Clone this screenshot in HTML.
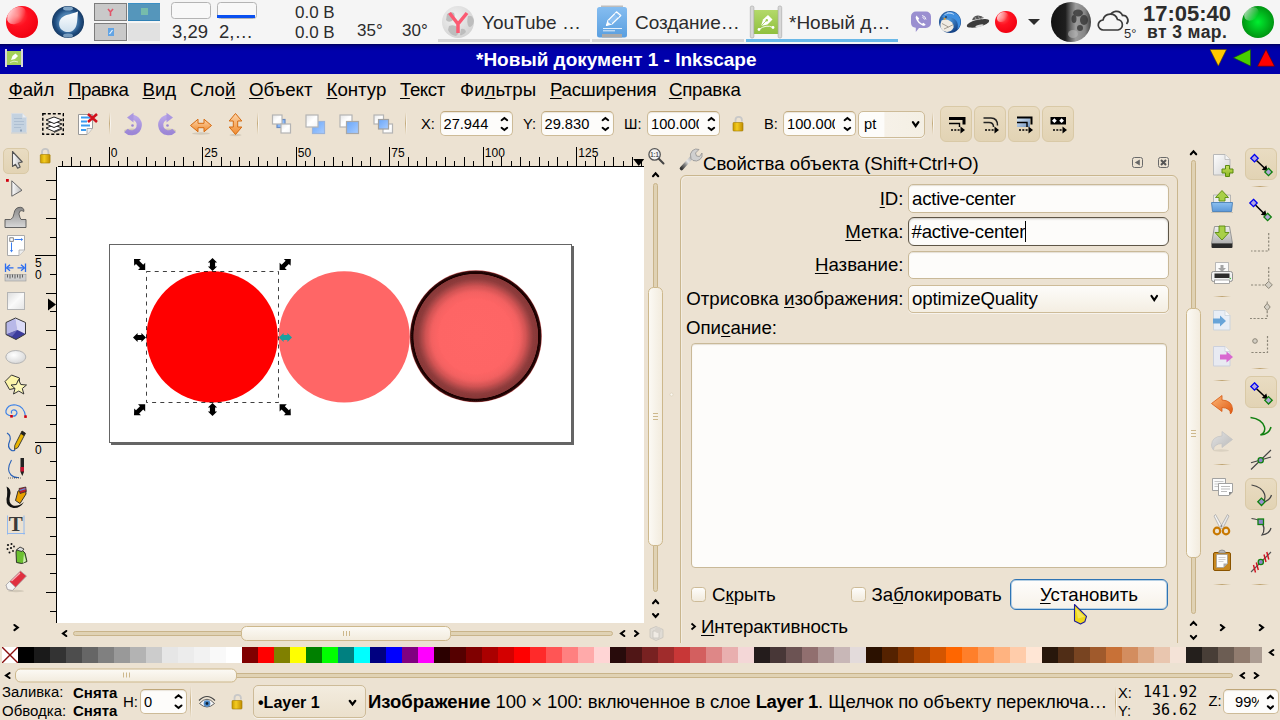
<!DOCTYPE html>
<html lang="ru">
<head>
<meta charset="utf-8">
<title>*Новый документ 1 - Inkscape</title>
<style>
html,body{margin:0;padding:0;}
body{width:1280px;height:720px;overflow:hidden;position:relative;background:#ece2d2;font-family:"Liberation Sans",sans-serif;color:#000;}
.abs,.abs *{position:absolute;}
.abs{position:absolute;}
div,span,svg{box-sizing:border-box;}
.t{position:absolute;white-space:nowrap;line-height:1;}
u{position:static !important;text-decoration:underline;text-underline-offset:2px;text-decoration-thickness:1px;}
/* ---------- top panel ---------- */
#panel{position:absolute;left:0;top:0;width:1280px;height:44px;background:#f5f5f5;}
#panel .t{font-family:"Liberation Sans",sans-serif;color:#2c2c2c;}
/* ---------- title bar ---------- */
#title{position:absolute;left:0;top:44px;width:1280px;height:30px;background:linear-gradient(#000058 0,#00008c 2px,#0000a6 5px,#0000ab 8px,#0000ab 100%);}
#title .t{color:#fff;font-weight:bold;font-size:18.67px;}
/* ---------- inkscape chrome ---------- */
#menubar{position:absolute;left:0;top:74px;width:1280px;height:30px;}
#menubar .t{font-size:18.67px;top:6.500px;}
.entry{position:absolute;background:#fdfcfa;border:1px solid #c9b998;border-radius:5px;box-shadow:inset 0 1px 1px rgba(120,95,50,.18);}
.lbl{font-size:18.67px;}

.tl{font-size:14.670px;top:13px;}
.spin{position:absolute;top:7px;width:73px;height:25px;background:#fdfcfa;border:1px solid #cdbb98;border-top-color:#bfa77a;border-radius:5px;box-shadow:inset 0 1px 1px rgba(120,95,50,.15);}
.spin .t{left:2.500px;top:5px;font-size:14.670px;}
.spin .clipv{left:3px;width:48px;overflow:hidden;height:16px;}
i.up,i.dn{position:absolute;width:8px;height:5px;}
.spin i.up{left:60px;top:5px;}
.spin i.dn{left:60px;top:15px;}
i.up::before,i.dn::before{content:"";position:absolute;left:1.500px;top:0;width:3.300px;height:3.300px;border:solid #000;border-width:1.900px 0 0 1.900px;transform:rotate(45deg);transform-origin:center;}
i.up::before{top:1.200px;}
i.dn::before{top:-1.600px;transform:rotate(225deg);}
.combo{position:absolute;border:1px solid #cdbb98;border-radius:5px;background:linear-gradient(to right,#fdfcfa 0,#fdfcfa 38%,#f6f1e8 40%,#f4efe4 100%);box-shadow:0 1px 0 rgba(255,255,255,.6);}
.tbtn{position:absolute;top:2px;width:32px;height:36px;background:linear-gradient(#e9dcc2,#e2d3b4);border:1px solid #d9c9a6;border-radius:6px;}
.tbtn svg{position:absolute;left:-1px;top:-1.700px;}

i.chev{position:absolute;width:7px;height:8px;}
i.chev::before{content:"";position:absolute;left:0;top:0;width:3.300px;height:3.300px;border:solid #000;border-width:1.900px 1.900px 0 0;transform-origin:center;}
i.chev.r::before{transform:translate(-.500px,1.400px) rotate(45deg);}
i.chev.l::before{transform:translate(2px,1.400px) rotate(225deg);}
i.chev.u::before{transform:translate(1px,2.200px) rotate(-45deg);}
i.chev.d::before{transform:translate(1px,-.300px) rotate(135deg);}

.ra{right:306.500px;}
.entry.foc{border:1.500px solid #5e5546;border-radius:6px;box-shadow:inset 0 1px 2px rgba(60,50,30,.25);}
.chk{position:absolute;width:15px;height:15px;border:1px solid #cdbb98;border-radius:3.500px;background:linear-gradient(#fefdfb,#f1eadc);}

.tsel{position:absolute;width:32px;height:32px;background:linear-gradient(#e9dcc2,#e2d3b4);border:1px solid #d9c9a6;border-radius:6px;}

.s15{font-size:14.670px;}
.b{font-weight:bold;}
.mono{font-family:"DejaVu Sans Mono","Liberation Mono",monospace;font-size:15px;}
b{position:static !important;}
</style>
</head>
<body>
<!-- ================= TOP PANEL ================= -->
<div id="panel">
<svg class="abs" style="left:0;top:0" width="1280" height="44" viewBox="0 0 1280 44">
<defs>
<radialGradient id="gRed" cx="0.35" cy="0.3" r="0.75"><stop offset="0" stop-color="#ff5a5a"/><stop offset="0.45" stop-color="#ff1020"/><stop offset="1" stop-color="#f00010"/></radialGradient>
<linearGradient id="gGloss" x1="0" y1="0" x2="0.6" y2="1"><stop offset="0" stop-color="#fff" stop-opacity="0.95"/><stop offset=".5" stop-color="#fff" stop-opacity="0.45"/><stop offset="1" stop-color="#fff" stop-opacity="0"/></linearGradient>
<radialGradient id="gGreen" cx="0.5" cy="0.5" r="0.55"><stop offset="0" stop-color="#00ee30"/><stop offset="0.7" stop-color="#00a818"/><stop offset="1" stop-color="#008c10"/></radialGradient>
<radialGradient id="gBlueBall" cx="0.5" cy="0.5" r="0.5"><stop offset="0.55" stop-color="#4a7eae"/><stop offset="0.8" stop-color="#1f4d80"/><stop offset="1" stop-color="#173a63"/></radialGradient>
<linearGradient id="gDrop" x1="0" y1="0" x2="0" y2="1"><stop offset="0" stop-color="#ffffff"/><stop offset="1" stop-color="#cfe0ee"/></linearGradient>
<radialGradient id="gGlobe" cx="0.4" cy="0.35" r="0.7"><stop offset="0" stop-color="#f2f2f2"/><stop offset="1" stop-color="#d2d2d2"/></radialGradient>
<linearGradient id="gMoon" x1="0" y1="0" x2="1" y2="0"><stop offset="0" stop-color="#121212"/><stop offset="0.36" stop-color="#1e1e1e"/><stop offset="0.5" stop-color="#686868"/><stop offset="0.62" stop-color="#9c9c9c"/><stop offset="0.85" stop-color="#868686"/><stop offset="1" stop-color="#404040"/></linearGradient>
<linearGradient id="gInk" x1="0" y1="0" x2="0" y2="1"><stop offset="0" stop-color="#b3d96a"/><stop offset="1" stop-color="#8fc03e"/></linearGradient>
<linearGradient id="gDoc" x1="0" y1="0" x2="0" y2="1"><stop offset="0" stop-color="#85bdf0"/><stop offset="1" stop-color="#5a9fe0"/></linearGradient>
<radialGradient id="gTb" cx="0.45" cy="0.4" r="0.6"><stop offset="0" stop-color="#4f9be0"/><stop offset="1" stop-color="#123f82"/></radialGradient>
</defs>
<!-- red ball -->
<circle cx="22" cy="22" r="16" fill="url(#gRed)"/>
<ellipse cx="16.500" cy="15.500" rx="10.500" ry="7.500" transform="rotate(-40 16.500 15.500)" fill="url(#gGloss)"/>
<!-- blue drop ball -->
<circle cx="68" cy="22" r="16" fill="url(#gBlueBall)"/>
<ellipse cx="68" cy="8.5" rx="5" ry="2" fill="#9fc0dc" opacity=".8"/>
<ellipse cx="68" cy="35.5" rx="5" ry="2" fill="#9fc0dc" opacity=".7"/>
<path d="M78 11.500 C77 19 78 26.500 73 30.500 C68.500 33.500 61.500 32 59.500 26.500 C58 21 61.500 16.500 66.500 15 C71 13.800 74.500 13 78 11.500 Z" fill="url(#gDrop)"/>
<!-- pager -->
<rect x="94.500" y="3.500" width="32" height="17" fill="#c9c9c9" stroke="#7d7d7d"/>
<rect x="128" y="3" width="32" height="18" fill="#5596bb"/><rect x="128" y="3" width="32" height="1" fill="#3a8fc4"/><rect x="128" y="20" width="32" height="1" fill="#2f80b4"/>
<rect x="94.500" y="23.500" width="32" height="17" fill="#c9c9c9" stroke="#7d7d7d"/>
<rect x="128" y="23" width="32" height="18" fill="#e1e1e1"/>
<path d="M108 9 L110.500 12 L113 9 M110.500 12 V16" stroke="#e0566a" stroke-width="1.600" fill="none"/>
<rect x="141" y="8" width="7" height="7" fill="#7cc3a8" opacity=".85"/>
<rect x="108" y="28" width="6" height="8" fill="#62a4e4"/><path d="M109.500 34 L112.500 30" stroke="#e8f2fc" stroke-width="1.200"/>
<!-- monitors -->
<rect x="171.500" y="2.500" width="39" height="16" rx="3" fill="#f8f8f8" stroke="#b4b4b4"/>
<rect x="217.500" y="2.500" width="39" height="16" rx="3" fill="#f8f8f8" stroke="#b4b4b4"/>
<rect x="217" y="15" width="38" height="3" fill="#0a50f0"/>
<!-- yandex browser -->
<circle cx="458" cy="22" r="16" fill="url(#gGlobe)"/>
<path d="M447 14 q4 -3 7 -1 q2 4 -2 8 q-4 2 -6 -1 z M468 16 q5 -1 6 5 q-1 6 -5 6 q-3 -4 -1 -11 z M449 26 q6 -2 9 2 q2 5 -2 8 q-6 -1 -8 -6 z M461 29 q4 -1 5 3 q-3 4 -6 3 z" fill="#bdbdbd"/>
<path d="M449.500 13 L458 24 L467 13 M458 23 V33" stroke="#fb5a72" stroke-width="3.500" fill="none" stroke-linejoin="miter"/>
<!-- task underlines -->
<rect x="438" y="39" width="152" height="3" fill="#d5d5d5"/>
<rect x="592" y="39" width="152" height="3" fill="#d5d5d5"/>
<rect x="746" y="39" width="152" height="3" fill="#6bb9e8"/>
<!-- doc icon -->
<rect x="601" y="5.500" width="22" height="3" fill="#bdbdbd"/>
<rect x="597" y="7" width="30" height="30.500" rx="2.500" fill="url(#gDoc)"/>
<rect x="602" y="34" width="20" height="3.500" fill="#aaa"/>
<path d="M603 28.500 h19 M603 30.800 h12" stroke="#e4f0fb" stroke-width="1"/>
<path d="M606.500 25.500 L608 20.500 L616.500 11.800 L620.800 15.500 L612 24 Z" fill="#8cc0f2" stroke="#fff" stroke-width="1.200" stroke-linejoin="round"/><path d="M606.500 25.500 L607.600 21.800 L610.500 24.300 Z" fill="#fff"/><path d="M614.800 13.500 L619 17.200" stroke="#6aabe8" stroke-width="1"/><path d="M608 20.500 L612 24" stroke="#6aabe8" stroke-width=".8"/>
<!-- inkscape icon -->
<g id="inkico">
<rect x="753" y="10" width="26" height="24" fill="url(#gInk)"/>
<rect x="750.300" y="6" width="3.600" height="32" rx="1.500" fill="#d8d8d8" stroke="#a4a4a4" stroke-width=".6"/>
<rect x="778.100" y="6" width="3.600" height="32" rx="1.500" fill="#d8d8d8" stroke="#a4a4a4" stroke-width=".6"/>
<path d="M759 29.500 Q766 24 773 27.500" stroke="#f4fae8" stroke-width="1" fill="none"/>
<circle cx="759" cy="29.500" r="1.400" fill="#fff"/><circle cx="773" cy="27.500" r="1.400" fill="#fff"/>
<path d="M761 26 L763 19.500 L768 15 L772.500 19.500 L767.500 24.500 Z" fill="#fff"/><circle cx="766.800" cy="20.200" r="1.200" fill="#9ccc50"/><path d="M761 26 L766 21" stroke="#9ccc50" stroke-width=".8"/>
</g>
<!-- viber -->
<path d="M916 11.500 h10 a5 5 0 0 1 5 5 v6.500 a5 5 0 0 1 -5 5 h-7 l-3.200 4 v-4.300 a5 5 0 0 1 -4.800 -4.700 v-6.500 a5 5 0 0 1 5 -5 z" fill="#9a8fd0"/>
<path d="M916.500 15.500 q-1.500 1.500 -.5 3.500 q2 4.500 6.500 6.500 q2 .8 3.200 -.8 l-2.200 -2 l-1.500 1 q-2.500 -1.200 -3.800 -3.800 l1 -1.500 z" fill="#fff"/>
<path d="M922 15.500 q3.500 .5 4 4 M922.500 17.500 q1.700 .3 2 2" stroke="#fff" stroke-width=".9" fill="none"/>
<!-- thunderbird -->
<circle cx="950" cy="22" r="11" fill="url(#gTb)"/>
<path d="M942 17 q3.500 -5.500 10 -5 q7 1.500 8.500 8 q.500 6 -3.500 10 q2 -5 -.500 -9 q-3 -4 -8 -3.500 q-4 .500 -6.500 -.500 z" fill="#3f8fe0"/>
<path d="M944.500 14.500 q4 -2.500 8 -1 M947 13 q4 -1 7 1.500" stroke="#cfe4fa" stroke-width=".7" fill="none"/>
<path d="M941.500 20.500 q4.500 -2 8.500 .500 q4 2.500 3.500 6.500 q-1.500 4 -6.500 4.500 q-4.500 -.500 -6.500 -4.500 q-.800 -3 1 -7 z" fill="#f0ebe2"/>
<path d="M942 23.500 l6.500 3.500 l5 -2.500 M944 29 l4.500 -2" stroke="#8f887c" stroke-width=".8" fill="none"/>
<path d="M943.500 17.500 l3 1.200 l-2.500 1.300 z" fill="#e8a020"/><circle cx="946" cy="17" r=".8" fill="#111"/>
<!-- ufo -->
<ellipse cx="978" cy="23.300" rx="11.500" ry="3.600" transform="rotate(-13 978 23.300)" fill="#3c3c3c"/>
<path d="M972 20.300 q1 -4.300 5.500 -4.800 q4.500 -.200 6.500 2.500 z" fill="#555"/>
<path d="M975 17.200 l1.500 3 M978.500 16.500 l1.200 3 M982 17 l.800 2.500" stroke="#bbb" stroke-width=".7"/>
<ellipse cx="979.500" cy="25.800" rx="4.200" ry="1.200" transform="rotate(-13 979.500 25.800)" fill="#dcdcdc"/>
<!-- red ball small -->
<circle cx="1006" cy="22" r="11" fill="url(#gRed)"/>
<ellipse cx="1002.500" cy="17" rx="6" ry="4.500" transform="rotate(-35 1002.500 17)" fill="url(#gGloss)"/>
<!-- arrow -->
<path d="M1028 19 h12 l-6 6 z" fill="#2d2d2d"/>
<!-- moon -->
<circle cx="1071" cy="22" r="20" fill="url(#gMoon)"/>
<g fill="#303030" opacity=".75"><ellipse cx="1078" cy="13" rx="5" ry="3.500"/><ellipse cx="1084" cy="20" rx="4" ry="5"/><ellipse cx="1080" cy="28" rx="3" ry="3"/><ellipse cx="1074" cy="19" rx="2.500" ry="4"/></g>
<ellipse cx="1073" cy="34" rx="5" ry="4" fill="#b8b8b8" opacity=".6"/>
<!-- cloud -->
<path d="M1110 17 a6.500 6.500 0 0 1 12.500 -1.500 a5 5 0 0 1 4 8.500" stroke="#3a3a3a" stroke-width="1.700" fill="none"/>
<path d="M1103.500 30 a5 5 0 0 1 -.5 -10 a7.500 7.500 0 0 1 14.500 -.5 a5.300 5.300 0 0 1 .5 10.500 z" stroke="#3a3a3a" stroke-width="1.700" fill="#f5f5f5"/>
<!-- green ball -->
<circle cx="1258" cy="22" r="16" fill="url(#gGreen)"/>
<ellipse cx="1251.500" cy="14" rx="8" ry="6" transform="rotate(-35 1251.500 14)" fill="url(#gGloss)" opacity=".8"/>
</svg>
<span class="t" style="left:172px;top:23px;font-size:18.500px;">3,29</span>
<span class="t" style="left:219px;top:23px;font-size:18.500px;">2,…</span>
<span class="t" style="left:295px;top:4px;font-size:17px;">0.0 B</span>
<span class="t" style="left:295px;top:24px;font-size:17px;">0.0 B</span>
<span class="t" style="left:357px;top:21.700px;font-size:17px;">35°</span>
<span class="t" style="left:402px;top:21.700px;font-size:17px;">30°</span>
<span class="t" style="left:482px;top:12.700px;font-size:19px;">YouTube …</span>
<span class="t" style="left:635px;top:12.700px;font-size:19px;">Создание…</span>
<span class="t" style="left:789px;top:12.700px;font-size:19px;">*Новый д…</span>
<span class="t" style="left:1124px;top:27px;font-size:13px;">5°</span>
<span class="t" style="left:1143px;top:3px;font-size:22px;font-weight:bold;">17:05:40</span>
<span class="t" style="left:1147px;top:24px;font-size:17.500px;letter-spacing:.4px;font-weight:bold;">вт 3 мар.</span>
</div>
<!-- ================= TITLE BAR ================= -->
<div id="title">
<span class="t" id="ttxt" style="left:476px;top:6px;font-size:19px;">*Новый документ 1 - Inkscape</span>
<svg class="abs" style="left:0;top:0" width="1280" height="30" viewBox="0 44 1280 30">
<rect x="6" y="51" width="16" height="14" fill="#a4d05a"/>
<rect x="5" y="49" width="2" height="18" fill="#d8d8d8"/><rect x="21" y="49" width="2" height="18" fill="#d8d8d8"/>
<path d="M10 62.500 q4 -2.500 8 -.500" stroke="#f0f8e0" stroke-width=".8" fill="none"/><path d="M11 60 l1.500 -4 l3 -2.500 l2.500 2.500 l-3 3 z" fill="#fff"/>
<path d="M1210 49.500 h16.500 l-8.200 16.500 z" fill="#ffc800" stroke="#5a4600" stroke-width=".6"/>
<path d="M1250.500 49.500 v16.500 l-17 -8.200 z" fill="#48d000" stroke="#1a5000" stroke-width=".6"/>
<path d="M1257.500 66.200 h17 l-8.500 -16.700 z" fill="#ff0000" stroke="#600000" stroke-width=".6"/>
</svg>
</div>
<!-- ================= MENU BAR ================= -->
<div id="menubar">
<span class="t" style="left:8.5px;"><u>Ф</u>айл</span>
<span class="t" style="left:68.0px;letter-spacing:-.45px;"><u>П</u>равка</span>
<span class="t" style="left:142.5px;"><u>В</u>ид</span>
<span class="t" style="left:190.0px;">Сло<u>й</u></span>
<span class="t" style="left:249.0px;"><u>О</u>бъект</span>
<span class="t" style="left:326.5px;"><u>К</u>онтур</span>
<span class="t" style="left:400.0px;letter-spacing:-.45px;"><u>Т</u>екст</span>
<span class="t" style="left:460.0px;">Фи<u>л</u>ьтры</span>
<span class="t" style="left:550.0px;letter-spacing:-.22px;"><u>Р</u>асширения</span>
<span class="t" style="left:668.9px;letter-spacing:-.22px;"><u>С</u>правка</span>
</div>
<!-- ================= TOOLBAR ================= -->
<div id="toolbar" class="abs" style="left:0;top:104px;width:1280px;height:42px;">
<svg class="abs" style="left:0;top:0" width="1280" height="42" viewBox="0 104 1280 42">
<defs>
<linearGradient id="gPurple" x1="0" y1="0" x2="0" y2="1"><stop offset="0" stop-color="#b9a6e8"/><stop offset="1" stop-color="#9c86d6"/></linearGradient>
<linearGradient id="gOrange" x1="0" y1="0" x2="0" y2="1"><stop offset="0" stop-color="#fdd4a8"/><stop offset="1" stop-color="#f08c30"/></linearGradient>
<linearGradient id="gWhiteSq" x1="0" y1="0" x2="1" y2="1"><stop offset="0" stop-color="#e6e6e6"/><stop offset=".5" stop-color="#ffffff"/><stop offset="1" stop-color="#f4f4f4"/></linearGradient>
<linearGradient id="gBlueSq" x1="0" y1="0" x2="1" y2="1"><stop offset="0" stop-color="#6aa6f8"/><stop offset="1" stop-color="#a8ccff"/></linearGradient>
<linearGradient id="gLock" x1="0" y1="0" x2="1" y2="0"><stop offset="0" stop-color="#c89a00"/><stop offset=".4" stop-color="#f4cc20"/><stop offset="1" stop-color="#c08c00"/></linearGradient>
<linearGradient id="gSep" x1="0" y1="0" x2="0" y2="1"><stop offset="0" stop-color="#cdb890" stop-opacity="0"/><stop offset=".5" stop-color="#c4ab7c"/><stop offset="1" stop-color="#cdb890" stop-opacity="0"/></linearGradient>
<linearGradient id="gSepW" x1="0" y1="0" x2="0" y2="1"><stop offset="0" stop-color="#fff" stop-opacity="0"/><stop offset=".5" stop-color="#fff"/><stop offset="1" stop-color="#fff" stop-opacity="0"/></linearGradient>
</defs>
<!-- 1: greyed doc -->
<path d="M11.500 113.500 h11 l4 4 v15.500 h-15 z" fill="#c4d2e0" stroke="#d9dde2"/>
<path d="M22.500 113.500 v4 h4" fill="#e8eef4" stroke="#d9dde2" stroke-width=".8"/>
<g stroke="#aebfd2" stroke-width="1"><path d="M14 118.500h8M14 121.500h10M14 124.500h10M14 127.500h7"/></g>
<rect x="20" y="129.500" width="2" height="2" fill="#8fa3bb"/>
<rect x="11" y="132.500" width="16" height="1.200" fill="#d4d4d0"/>
<!-- 2: select all in layers -->
<rect x="42.800" y="113.800" width="20.500" height="20.500" fill="none" stroke="#000" stroke-width="1.400" stroke-dasharray="3 2"/>
<g stroke="#222" stroke-width="1" fill="#fff"><path d="M46 128 l8 -3 l8 3 l-8 3.500 z"/><path d="M46 124 l8 -3 l8 3 l-8 3.500 z"/><path d="M46 120 l8 -3 l8 3 l-8 3.500 z"/></g>
<path d="M54 131.500 l8 -3.500 v1.500 l-8 3.500 z" fill="#444"/>
<!-- 3: deselect -->
<path d="M78.500 114.500 h14 v14 l-5.500 6 h-8.500 z" fill="#fff" stroke="#999" stroke-width="1"/>
<path d="M87 134.500 v-6 h5.500" fill="#eee" stroke="#999" stroke-width=".8"/>
<g stroke="#3c9cf0" stroke-width="2"><path d="M81 117.500h9M81 121.500h6M81 125.500h9M81 130h5"/></g>
<path d="M88 114 l9 8 M97 114 l-9 8" stroke="#d0101c" stroke-width="2.600"/>
<!-- separators -->
<g id="seps">
<rect x="109" y="112" width="1" height="23" fill="url(#gSep)"/><rect x="110" y="112" width="1" height="23" fill="url(#gSepW)" opacity=".7"/>
<rect x="257" y="112" width="1" height="23" fill="url(#gSep)"/><rect x="258" y="112" width="1" height="23" fill="url(#gSepW)" opacity=".7"/>
<rect x="405" y="112" width="1" height="23" fill="url(#gSep)"/><rect x="406" y="112" width="1" height="23" fill="url(#gSepW)" opacity=".7"/>
<rect x="932" y="112" width="1" height="23" fill="url(#gSep)"/><rect x="933" y="112" width="1" height="23" fill="url(#gSepW)" opacity=".7"/>
</g>
<!-- rotate ccw -->
<ellipse cx="132" cy="131" rx="8" ry="2.500" fill="#b8b0a0" opacity=".55"/>
<path d="M131.500 117.200 A7.800 7.800 0 1 1 126 130.500" fill="none" stroke="url(#gPurple)" stroke-width="5"/>
<path d="M127 117.500 L133.500 112.800 V122.500 Z" fill="#ab97e0"/>
<circle cx="132.500" cy="125.500" r="1.300" fill="#9a84d4"/>
<!-- rotate cw -->
<ellipse cx="168" cy="131" rx="8" ry="2.500" fill="#b8b0a0" opacity=".55"/>
<path d="M168.500 117.200 A7.800 7.800 0 1 0 174 130.500" fill="none" stroke="url(#gPurple)" stroke-width="5"/>
<path d="M173 117.500 L166.500 112.800 V122.500 Z" fill="#ab97e0"/>
<circle cx="167.500" cy="125.500" r="1.300" fill="#9a84d4"/>
<!-- flip h -->
<ellipse cx="201" cy="133.500" rx="9" ry="1.200" fill="#b8b0a0" opacity=".5"/>
<path d="M190.500 125.500 L198 119.200 V123.300 H204 V119.200 L211.500 125.500 L204 131.800 V127.700 H198 V131.800 Z" fill="url(#gOrange)" stroke="#d56a10" stroke-width="1" stroke-linejoin="round"/>
<!-- flip v -->
<ellipse cx="235.500" cy="135" rx="6" ry="1.200" fill="#b8b0a0" opacity=".5"/>
<path d="M235.500 113.500 L241.800 121 H237.700 V127 H241.800 L235.500 134.500 L229.200 127 H233.300 V121 H229.200 Z" fill="url(#gOrange)" stroke="#d56a10" stroke-width="1" stroke-linejoin="round"/>
<!-- z-order 1 -->
<g stroke="#b4b4b4" stroke-width="1.200">
<rect x="277" y="119.500" width="8" height="8" fill="url(#gBlueSq)" stroke="#6a8cc0"/>
<rect x="272.500" y="115" width="9.500" height="9" fill="url(#gWhiteSq)"/>
<rect x="281" y="124" width="9.500" height="9" fill="url(#gWhiteSq)"/>
<!-- 2 -->
<rect x="312.500" y="121.500" width="12" height="12" fill="url(#gBlueSq)" stroke="#9ab4dc"/>
<rect x="306" y="115" width="12" height="12" fill="url(#gWhiteSq)"/>
<!-- 3 -->
<rect x="340" y="115" width="12" height="12" fill="url(#gWhiteSq)"/>
<rect x="346.500" y="121.500" width="12" height="12" fill="url(#gBlueSq)" stroke="#a8a8a8"/>
<!-- 4 -->
<rect x="374" y="115" width="9.500" height="9" fill="url(#gWhiteSq)"/>
<rect x="383" y="124" width="9.500" height="9" fill="url(#gWhiteSq)"/>
<rect x="378.500" y="119.500" width="10" height="9.500" fill="url(#gBlueSq)" stroke="#a0a0a0"/>
</g>
<!-- lock open -->
<path d="M735.500 122.500 v-2.500 a3.200 3.200 0 0 1 6.400 0 v1.500" fill="none" stroke="#c8c8c8" stroke-width="1.800"/>
<rect x="733" y="122.500" width="10" height="8.500" rx=".8" fill="url(#gLock)" stroke="#a07800" stroke-width=".6"/>
</svg>
<span class="t tl" style="left:421px;">X:</span>
<span class="t tl" style="left:523px;">Y:</span>
<span class="t tl" style="left:624px;">Ш:</span>
<span class="t tl" style="left:764px;">В:</span>
<div class="spin" style="left:440px;"><span class="t">27.944</span></div>
<div class="spin" style="left:541px;"><span class="t">29.830</span></div>
<div class="spin" style="left:647px;"><span class="t clipv">100.000</span></div>
<div class="spin" style="left:783px;"><span class="t clipv">100.000</span></div>
<div class="combo" style="left:858px;top:7px;width:67px;height:27px;"><span class="t" style="left:5px;top:5px;font-size:14.670px;">pt</span></div>
<div class="tbtn" style="left:940px;"><svg width="32" height="36" viewBox="0 0 32 36"><path d="M9 13.500 H24 V19.500" fill="none" stroke="#000" stroke-width="3"/><path d="M9 18.500 H19.500 V22" fill="none" stroke="#000" stroke-width="1.400"/><path d="M11 25 H21" stroke="#000" stroke-width="1.600" stroke-dasharray="2 1.300"/><path d="M20.500 21.500 L25 25 L20.500 28.500 Z" fill="#000"/></svg></div>
<div class="tbtn" style="left:974px;"><svg width="32" height="36" viewBox="0 0 32 36"><path d="M9.500 13 H17 Q23.500 13 23.500 20.500" fill="none" stroke="#222" stroke-width="1.500"/><path d="M9.500 17.500 H15 Q19.500 17.500 19.500 22" fill="none" stroke="#222" stroke-width="1.500"/><path d="M11 25 H21" stroke="#000" stroke-width="1.600" stroke-dasharray="2 1.300"/><path d="M20.500 21.500 L25 25 L20.500 28.500 Z" fill="#000"/></svg></div>
<div class="tbtn" style="left:1008px;"><svg width="32" height="36" viewBox="0 0 32 36"><defs><linearGradient id="gGr" x1="0" y1="0" x2="1" y2="1"><stop offset="0" stop-color="#d8e6f4"/><stop offset="1" stop-color="#7094c0"/></linearGradient></defs><rect x="9" y="13" width="13" height="9" fill="url(#gGr)"/><path d="M9 12.500 H23.500 V19.500" fill="none" stroke="#000" stroke-width="2"/><path d="M9 17.500 H19 V22" fill="none" stroke="#000" stroke-width="1.400"/><path d="M11 25 H21" stroke="#000" stroke-width="1.600" stroke-dasharray="2 1.300"/><path d="M20.500 21.500 L25 25 L20.500 28.500 Z" fill="#000"/></svg></div>
<div class="tbtn" style="left:1042px;"><svg width="32" height="36" viewBox="0 0 32 36"><rect x="8.500" y="12" width="15.500" height="7.500" fill="#000"/><g fill="#fff"><path d="M10 15.700 l2.400 -2.400 l2.400 2.400 l-2.400 2.400 z M17.200 15.700 l2.400 -2.400 l2.400 2.400 l-2.400 2.400 z"/></g><path d="M11 25 H21" stroke="#000" stroke-width="1.600" stroke-dasharray="2 1.300"/><path d="M20.500 21.500 L25 25 L20.500 28.500 Z" fill="#000"/></svg></div>
</div>
<!-- ================= LEFT TOOLBOX ================= -->

<!-- ================= CANVAS ================= -->
<div id="canvaswrap" class="abs" style="left:0px;top:146px;width:680px;height:500px;">
<svg class="abs" style="left:0;top:0" width="680" height="500" viewBox="0 146 680 500" font-family="Liberation Sans, sans-serif">
<rect x="57" y="167" width="587" height="456" fill="#fff"/>
<g fill="#000">
<rect x="58" y="166" width="586" height="1"/>
<rect x="56" y="167" width="1" height="456"/>
<rect x="62" y="161" width="1" height="5"/><rect x="71" y="157" width="1" height="9"/><rect x="80" y="161" width="1" height="5"/><rect x="90" y="157" width="1" height="9"/><rect x="99" y="161" width="1" height="5"/><rect x="109" y="147" width="1" height="19"/><rect x="118" y="161" width="1" height="5"/><rect x="127" y="157" width="1" height="9"/><rect x="137" y="161" width="1" height="5"/><rect x="146" y="157" width="1" height="9"/><rect x="155" y="161" width="1" height="5"/><rect x="165" y="157" width="1" height="9"/><rect x="174" y="161" width="1" height="5"/><rect x="183" y="157" width="1" height="9"/><rect x="193" y="161" width="1" height="5"/><rect x="202" y="147" width="1" height="19"/><rect x="211" y="161" width="1" height="5"/><rect x="221" y="157" width="1" height="9"/><rect x="230" y="161" width="1" height="5"/><rect x="239" y="157" width="1" height="9"/><rect x="249" y="161" width="1" height="5"/><rect x="258" y="157" width="1" height="9"/><rect x="267" y="161" width="1" height="5"/><rect x="277" y="157" width="1" height="9"/><rect x="286" y="161" width="1" height="5"/><rect x="296" y="147" width="1" height="19"/><rect x="305" y="161" width="1" height="5"/><rect x="314" y="157" width="1" height="9"/><rect x="324" y="161" width="1" height="5"/><rect x="333" y="157" width="1" height="9"/><rect x="342" y="161" width="1" height="5"/><rect x="352" y="157" width="1" height="9"/><rect x="361" y="161" width="1" height="5"/><rect x="370" y="157" width="1" height="9"/><rect x="380" y="161" width="1" height="5"/><rect x="389" y="147" width="1" height="19"/><rect x="398" y="161" width="1" height="5"/><rect x="408" y="157" width="1" height="9"/><rect x="417" y="161" width="1" height="5"/><rect x="426" y="157" width="1" height="9"/><rect x="436" y="161" width="1" height="5"/><rect x="445" y="157" width="1" height="9"/><rect x="454" y="161" width="1" height="5"/><rect x="464" y="157" width="1" height="9"/><rect x="473" y="161" width="1" height="5"/><rect x="483" y="147" width="1" height="19"/><rect x="492" y="161" width="1" height="5"/><rect x="501" y="157" width="1" height="9"/><rect x="511" y="161" width="1" height="5"/><rect x="520" y="157" width="1" height="9"/><rect x="529" y="161" width="1" height="5"/><rect x="539" y="157" width="1" height="9"/><rect x="548" y="161" width="1" height="5"/><rect x="557" y="157" width="1" height="9"/><rect x="567" y="161" width="1" height="5"/><rect x="576" y="147" width="1" height="19"/><rect x="585" y="161" width="1" height="5"/><rect x="595" y="157" width="1" height="9"/><rect x="604" y="161" width="1" height="5"/><rect x="613" y="157" width="1" height="9"/><rect x="623" y="161" width="1" height="5"/><rect x="632" y="157" width="1" height="9"/><rect x="641" y="161" width="1" height="5"/>
<rect x="46" y="180" width="10" height="1"/><rect x="50" y="199" width="6" height="1"/><rect x="46" y="218" width="10" height="1"/><rect x="50" y="237" width="6" height="1"/><rect x="35" y="255" width="21" height="1"/><rect x="50" y="274" width="6" height="1"/><rect x="46" y="293" width="10" height="1"/><rect x="50" y="311" width="6" height="1"/><rect x="46" y="330" width="10" height="1"/><rect x="50" y="349" width="6" height="1"/><rect x="46" y="367" width="10" height="1"/><rect x="50" y="386" width="6" height="1"/><rect x="46" y="405" width="10" height="1"/><rect x="50" y="424" width="6" height="1"/><rect x="35" y="442" width="21" height="1"/><rect x="50" y="461" width="6" height="1"/><rect x="46" y="480" width="10" height="1"/><rect x="50" y="498" width="6" height="1"/><rect x="46" y="517" width="10" height="1"/><rect x="50" y="536" width="6" height="1"/><rect x="46" y="554" width="10" height="1"/><rect x="50" y="573" width="6" height="1"/><rect x="46" y="592" width="10" height="1"/><rect x="50" y="611" width="6" height="1"/>
<path d="M633.300 159 H644.200 L638.750 166 Z"/>
<path d="M48 298.500 L56 304.500 L48 310.500 Z"/>
<text x="110.8" y="157" font-size="12">0</text><text x="204.3" y="157" font-size="12">25</text><text x="297.8" y="157" font-size="12">50</text><text x="391.3" y="157" font-size="12">75</text><text x="484.8" y="157" font-size="12">100</text><text x="578.3" y="157" font-size="12">125</text>
<text x="35" y="266.500" font-size="12">5</text><text x="35" y="278.500" font-size="12">0</text>
<text x="35" y="454" font-size="12">0</text>
</g>
<!-- page -->
<rect x="111" y="246" width="463" height="199" fill="#656565"/>
<rect x="109.500" y="244.500" width="462" height="198" fill="#fff" stroke="#656565" stroke-width="1"/>
</svg>
<svg class="abs" style="left:0;top:0" width="680" height="500" viewBox="0 146 680 500">
<defs>
<radialGradient id="gBtn3" cx="0.5" cy="0.5" r="0.5"><stop offset="0" stop-color="#ff6666"/><stop offset=".56" stop-color="#fe6565"/><stop offset=".67" stop-color="#f36161"/><stop offset=".76" stop-color="#d05353"/><stop offset=".83" stop-color="#a54545"/><stop offset=".875" stop-color="#8e3b3b"/><stop offset=".94" stop-color="#863737"/><stop offset=".95" stop-color="#1a0303"/><stop offset=".985" stop-color="#2a0808"/><stop offset="1" stop-color="#c05050"/></radialGradient>
<filter id="blur1" x="-5%" y="-5%" width="110%" height="110%"><feGaussianBlur stdDeviation=".7"/></filter>
</defs>
<g filter="url(#blur1)">
<circle cx="212.100" cy="336.900" r="65.700" fill="#ff0000"/>
<circle cx="344.200" cy="336.800" r="65.600" fill="#ff6666"/>
<circle cx="475.800" cy="336.300" r="66" fill="url(#gBtn3)"/>
</g>
<!-- selection -->
<rect x="146.500" y="271.500" width="132" height="131" fill="none" stroke="#000" stroke-width="1" stroke-dasharray="4 4.200" opacity=".75"/>
<g fill="#000" id="handles">
<path id="hc" d="M134 259 h7 l-1.800 1.800 l4 4 l2 -2 v7.200 h-7.200 l2 -2 l-4 -4 l-1.800 1.800 z"/>
<use href="#hc" transform="translate(424.800 0) scale(-1 1)"/>
<use href="#hc" transform="translate(0 674.300) scale(1 -1)"/>
<use href="#hc" transform="translate(424.800 674.300) scale(-1 -1)"/>
<path id="hv" d="M212.500 258 l4.600 4.600 h-2 v3.800 h2 l-4.600 4.600 l-4.600 -4.600 h2 v-3.800 h-2 z"/>
<use href="#hv" transform="translate(0 145)"/>
<path id="hh" d="M133 337.500 l4.600 -4.600 v2 h3.800 v-2 l4.600 4.600 l-4.600 4.600 v-2 h-3.800 v2 z"/>
<use href="#hh" transform="translate(146 0)" fill="#1aa0a0"/>
</g>
</svg>
</div>
<div id="toolbox" class="abs" style="left:0;top:146px;width:58px;height:500px;">
<div class="abs" style="left:3px;top:2px;width:26px;height:26px;background:linear-gradient(#e9dcc2,#e2d3b4);border:1px solid #d9c9a6;border-radius:5px;"></div>
<svg class="abs" style="left:0;top:0" width="58" height="500" viewBox="0 146 58 500">
<defs>
<linearGradient id="gArrow" x1="0" y1="0" x2="1" y2="0"><stop offset="0" stop-color="#fdfdfd"/><stop offset="1" stop-color="#b8b8b8"/></linearGradient>
<linearGradient id="gGrayV" x1="0" y1="0" x2="0" y2="1"><stop offset="0" stop-color="#888"/><stop offset="1" stop-color="#d8d8d8"/></linearGradient>
<linearGradient id="gRectT" x1="0" y1="0" x2="1" y2="1"><stop offset="0" stop-color="#dcdcdc"/><stop offset=".5" stop-color="#fafafa"/><stop offset="1" stop-color="#e4e4e4"/></linearGradient>
<radialGradient id="gEll" cx=".4" cy=".35" r=".7"><stop offset="0" stop-color="#ffffff"/><stop offset="1" stop-color="#d6d6d6"/></radialGradient>
<linearGradient id="gCube" x1="0" y1="0" x2="1" y2="1"><stop offset="0" stop-color="#c8c8f0"/><stop offset="1" stop-color="#4a4a98"/></linearGradient>
</defs>
<!-- selector -->
<path d="M12.500 151.500 L12.500 166.500 L15.500 164.300 L17.600 168.300 L20.200 167 L18.300 163 L22.300 162 Z" fill="url(#gArrow)" stroke="#555" stroke-width="1.100" stroke-linejoin="round"/>
<!-- node -->
<rect x="6" y="179" width="2.800" height="2.800" fill="#d00010"/>
<path d="M11.800 180.800 L22 190.300 L11.800 196.200 Z" fill="url(#gArrow)" stroke="#666" stroke-width="1" stroke-linejoin="round"/>
<!-- tweak -->
<path d="M5 227.500 V219.500 H10.500 Q13.500 218.500 14 213.500 Q15 207 20.500 207.300 Q24.500 208 23.800 211.500 Q22 209.800 19.800 211.200 Q18 213.500 20 217.500 L21 219.500 H26 V227.500 Z" fill="url(#gGrayV)" stroke="#555" stroke-width=".9"/>
<!-- page zoom -->
<path d="M7.500 235.500 h17 v14.500 l-5.500 5.500 h-11.500 z" fill="#fff" stroke="#aaa" stroke-width="1"/>
<path d="M19 255.500 v-5.500 h5.500" fill="#eee" stroke="#aaa" stroke-width=".8"/>
<rect x="9.800" y="237.800" width="3.500" height="3.500" fill="#fff" stroke="#666" stroke-width=".8"/>
<path d="M14.500 239.500 H22 M11.500 242.500 V251" stroke="#3a7ef0" stroke-width="1" fill="none"/><path d="M21 238 l2.200 1.500 l-2.200 1.500 z M10 250 l1.500 2.500 l1.500 -2.500 z" fill="#3a7ef0"/>
<!-- measure -->
<path d="M5.500 263.500 v8.500 M25.500 263.500 v8.500 M6.500 267.800 h7 M17.500 267.800 h7" stroke="#2a6cf0" stroke-width="1.300" fill="none"/>
<path d="M6.500 267.800 l3.500 -3 M6.500 267.800 l3.500 3 M24.500 267.800 l-3.500 -3 M24.500 267.800 l-3.500 3" stroke="#2a6cf0" stroke-width="1.300"/>
<rect x="5" y="274.500" width="21" height="6.500" fill="#cfcfcf" stroke="#999" stroke-width=".6"/>
<path d="M7.500 274.500v3M10 274.500v4M12.500 274.500v3M15 274.500v4M17.500 274.500v3M20 274.500v4M22.500 274.500v3" stroke="#555" stroke-width=".9"/>
<!-- rect -->
<rect x="7.500" y="292.500" width="17" height="17" fill="url(#gRectT)" stroke="#b4b4b4" stroke-width="1"/>
<!-- 3d box -->
<path d="M6 322.500 L15.500 318 L17.500 330 L6 334.500 Z" fill="#b8b8e8"/>
<path d="M15.500 318 L25.500 322.500 L25.500 334 L17.500 330 Z" fill="#dcdcf8"/>
<path d="M6 334.500 L17.500 330 L25.500 334 L16 339.500 Z" fill="#3c3c9c"/>
<path d="M6 334.500 L17.500 330 L12 336.500 Z" fill="#7070c0" opacity=".8"/>
<path d="M15.500 318 L25.500 322.500 V334 L16 339.500 L6 334.500 V322.500 Z" fill="none" stroke="#3a3a3a" stroke-width="1" stroke-linejoin="round"/>
<!-- ellipse -->
<ellipse cx="15.800" cy="357" rx="10" ry="6.500" fill="url(#gEll)" stroke="#b4b4b4" stroke-width="1"/>
<!-- star -->
<path d="M5 381.500 L11.500 375 L19.500 378 L19 387.500 L9.500 389.500 Z" fill="#fbf4a8" stroke="#333" stroke-width="1"/>
<path d="M18.500 379.500 L20.800 384.500 L26.500 385 L22.300 388.500 L23.800 394 L18.800 391 L13.500 394 L15 388.500 L11 385 L16.300 384.500 Z" fill="#fdf8b8" stroke="#333" stroke-width="1" stroke-linejoin="round"/>
<!-- spiral -->
<path d="M11.500 416 Q5 415 6 410.500 Q8 404 16 405 Q24.500 406.500 25.500 416.500 M11.500 416 Q16 417 17 413 Q16.500 409.500 13 410 Q10.500 411 11.800 413.500" fill="none" stroke="#3c82e8" stroke-width="1.200"/>
<rect x="10.200" y="415" width="2.600" height="2.600" fill="#d00010"/><rect x="24.200" y="415.300" width="2.600" height="2.600" fill="#d00010"/>
<!-- pencil -->
<path d="M7 433 Q12 436 9.500 441.500 Q7 447 11 450 Q13 451.500 15 450" fill="none" stroke="#2a62b8" stroke-width="1.200"/>
<path d="M22 431 L25.500 433.300 L18 447.500 L14.500 449.500 L14.800 445.300 Z" fill="#e8b400" stroke="#333" stroke-width=".9"/>
<path d="M22 431 L25.500 433.300 L24 436 L20.600 433.800 Z" fill="#222"/>
<!-- pen bezier -->
<path d="M11.500 460 Q6 470 11 475 Q14 478 19 477.500" fill="none" stroke="#2a62b8" stroke-width="1.100"/>
<path d="M8 478 H22" stroke="#444" stroke-width=".8" stroke-dasharray="1 1"/>
<path d="M20.500 458 h3.500 v14 l-1.700 4 l-1.800 -4 z" fill="#222"/><rect x="20.500" y="467" width="3.500" height="4.500" fill="#c8102e"/>
<!-- calligraphy -->
<path d="M6.500 486.500 Q12 489 10 496 Q8 503 13 505.500 Q18 507 24 502 Q20 508.500 13.500 508 Q6 507 6.500 499 Q8 492 6.500 486.500 Z" fill="#111"/>
<path d="M18 491 L25.500 488.500 L26 494 L20 503.500 L15.500 500.500 Z" fill="#e8a000" stroke="#222" stroke-width=".9"/>
<path d="M19 488.500 L25.800 487 L26.300 491.500 L20 493.500 Z" fill="#c02030" stroke="#222" stroke-width=".7"/><path d="M19.500 490.500 l6 -1.800" stroke="#5a8ce0" stroke-width="1.300"/>
<!-- text -->
<path d="M7.500 515.500 V534.500 M7 533.500 H25 M24 515.500 V534.500" stroke="#8ab4f0" stroke-width=".9" fill="none"/>
<text x="8.800" y="530.500" font-family="Liberation Serif, serif" font-weight="bold" font-size="21" fill="#3a3a3a">T</text>
<!-- spray -->
<g fill="#111"><circle cx="8" cy="545" r="1.100"/><circle cx="11.500" cy="544" r="1"/><circle cx="7.500" cy="549" r="1"/><circle cx="11" cy="548" r="1.100"/><circle cx="14" cy="546.500" r=".9"/><circle cx="9.500" cy="552.500" r="1"/><circle cx="13" cy="551" r=".9"/></g>
<path d="M16 552 Q16.500 548 20.500 548.500 L25 553 L27 561.500 Q22 565 16.500 562.500 Z" fill="#6cc030" stroke="#222" stroke-width=".9"/>
<path d="M16.500 550 L20 547 L24 549 L22 551.500 Z" fill="#ddd" stroke="#222" stroke-width=".8"/>
<path d="M24 553.500 L26 561 Q24.500 562.500 23 563 Z" fill="#e8f8d8" opacity=".8"/>
<!-- eraser -->
<path d="M6 585 L20.500 571 L26.500 576 L12.500 590.500 L7.500 589.500 Z" fill="#e03040" stroke="#a8a8a8" stroke-width=".8"/>
<path d="M6 585 L9.500 581.500 L15.500 587.200 L12.500 590.500 L7.500 589.500 Z" fill="#f4f4f4" stroke="#a8a8a8" stroke-width=".8"/>
<path d="M11.500 581 L20 573" stroke="#f8b0b8" stroke-width="1.200"/>
<ellipse cx="16" cy="591" rx="8" ry="1.200" fill="#b8b0a0" opacity=".5"/>
<!-- lock -->
<path d="M42 154.500 v-2.500 a3.200 3.200 0 0 1 6.400 0 v2.500" fill="none" stroke="#c4c4c4" stroke-width="1.800"/>
<rect x="40.300" y="154.500" width="9.800" height="8.500" rx=".8" fill="url(#gLock)" stroke="#a07800" stroke-width=".6"/>
</svg>
</div>
<!-- ================= DOCK ================= -->
<div id="dock" class="abs" style="left:0;top:146px;width:1210px;height:500px;">
<!-- canvas vertical scrollbar -->
<svg class="abs" style="left:644px;top:0" width="36" height="500" viewBox="644 146 36 500">
<defs><linearGradient id="gSl" x1="0" y1="0" x2="1" y2="0"><stop offset="0" stop-color="#fcfaf5"/><stop offset="1" stop-color="#f2ebdd"/></linearGradient>
<linearGradient id="gSlV" x1="0" y1="0" x2="0" y2="1"><stop offset="0" stop-color="#fcfaf5"/><stop offset="1" stop-color="#f2ebdd"/></linearGradient></defs>
<circle cx="654.600" cy="154.400" r="5.700" fill="#f4f4f2" stroke="#555" stroke-width="1.300"/>
<path d="M658.800 158.800 L663.500 163.500" stroke="#444" stroke-width="2" stroke-linecap="round"/>
<text x="650.300" y="157.300" font-size="7.500" font-weight="bold" font-family="Liberation Sans, sans-serif" fill="#555" textLength="8.600" lengthAdjust="spacingAndGlyphs">1:1</text>
<rect x="653.500" y="183.500" width="4" height="408" rx="2" fill="#e0d2b4" stroke="#c9b48a"/>
<rect x="648.500" y="287.500" width="14" height="258" rx="5" fill="url(#gSl)" stroke="#cdb88c"/>
<path d="M653 413.500h5M653 416.500h5M653 419.500h5" stroke="#cdb88c" stroke-width="1"/>
<circle cx="671.500" cy="394.500" r="1.500" fill="#fbf8f2" stroke="#d8ccb4" stroke-width=".6"/>
<!-- color-managed icon (insensitive) -->
<g opacity=".55"><path d="M650 629 l6 -2.500 l7 3 v8 l-7 3 l-6 -3 z" fill="#d8d8d8" stroke="#aaa" stroke-width=".8"/><path d="M653 631 h6 v7 h-6 z" fill="#f4f4f4" stroke="#999" stroke-width=".6"/><circle cx="658" cy="630" r="3" fill="#c8c8c8"/></g>
</svg>
<!-- h scrollbar -->
<svg class="abs" style="left:57px;top:478px" width="590" height="18" viewBox="57 624 590 18">
<rect x="73.500" y="631.500" width="539" height="4" rx="2" fill="#e0d2b4" stroke="#c9b48a"/>
<rect x="241.500" y="626.500" width="209" height="14" rx="5" fill="url(#gSlV)" stroke="#cdb88c"/>
<path d="M343.500 631v5M346.500 631v5M349.500 631v5" stroke="#cdb88c" stroke-width="1"/>
</svg>
<!-- dock -->
<svg class="abs" style="left:678px;top:0" width="30" height="30" viewBox="678 146 30 30">
<defs><linearGradient id="gWr" x1="0" y1="1" x2="1" y2="0"><stop offset="0" stop-color="#333"/><stop offset=".35" stop-color="#888"/><stop offset=".6" stop-color="#e8e8e8"/><stop offset="1" stop-color="#aaa"/></linearGradient></defs>
<path d="M681.500 168.500 L692 157" stroke="url(#gWr)" stroke-width="3.600" stroke-linecap="round"/>
<path d="M691 158.500 Q689 153.500 692.500 150.500 Q695.500 148 699 149.500 L695.500 153 L696.500 156 L699.500 156.500 L702 153 Q703 157 700 159.500 Q696.500 162 693 160.500 Z" fill="#cfcfcf" stroke="#8a8a8a" stroke-width=".7"/>
</svg>
<span class="t lbl" style="left:703px;top:8.50px;font-size:18.580px;">Свойства объекта (Shift+Ctrl+O)</span>
<div class="abs" style="left:1132px;top:11px;width:11px;height:11px;border:1px solid #6a6a6a;border-radius:2.500px;"><svg width="9" height="9" viewBox="0 0 9 9" style="left:0;top:0"><path d="M6.800 1.500 V7.500 L1.800 4.500 Z" fill="#666"/></svg></div>
<div class="abs" style="left:1158px;top:11px;width:11px;height:11px;border:1px solid #6a6a6a;border-radius:2.500px;"><svg width="9" height="9" viewBox="0 0 9 9" style="left:0;top:0"><path d="M2 2 L7 7 M7 2 L2 7" stroke="#555" stroke-width="2"/></svg></div>
<div class="abs" style="left:680px;top:29px;width:498px;height:468px;overflow:hidden;"><div class="abs" style="left:0;top:0;width:498px;height:474px;border:1px solid #c9b68e;border-radius:6px;box-shadow:inset 1px 1px 0 rgba(255,255,255,.35);"></div></div>
<span class="t lbl ra" style="top:43.75px;"><u>I</u>D:</span>
<span class="t lbl ra" style="top:76.75px;"><u>М</u>етка:</span>
<span class="t lbl ra" style="top:109.75px;"><u>Н</u>азвание:</span>
<span class="t lbl ra" style="top:143.75px;">Отрисовка <u>и</u>зображения:</span>
<div class="entry" style="left:908px;top:38px;width:261px;height:28.500px;"><span class="t lbl" style="left:3px;top:4.75px;letter-spacing:-.25px;">active-center</span></div>
<div class="entry foc" style="left:908px;top:71px;width:261px;height:29px;"><span class="t lbl" style="left:2.500px;top:5.25px;letter-spacing:-.25px;">#active-center</span><div class="abs" style="left:116px;top:3px;width:1px;height:21px;background:#000;"></div></div>
<div class="entry" style="left:908px;top:104.500px;width:261px;height:28px;"></div>
<div class="combo" style="left:908px;top:138.500px;width:261px;height:28.500px;background:linear-gradient(#fdfcfa,#f4eee2);"><span class="t lbl" style="left:3px;top:4.75px;letter-spacing:-.13px;">optimizeQuality</span></div>
<span class="t lbl" style="left:686px;top:173.25px;">Опи<u>с</u>ание:</span>
<div class="entry" style="left:691px;top:197px;width:476px;height:225px;border-radius:4px;"></div>
<div class="chk" style="left:691px;top:441px;"></div>
<span class="t lbl" style="left:712px;top:439.75px;">С<u>к</u>рыть</span>
<div class="chk" style="left:851px;top:441px;"></div>
<span class="t lbl" style="left:871.500px;top:439.75px;">За<u>б</u>локировать</span>
<div class="abs" style="left:1010px;top:433px;width:158px;height:30.500px;border:1.500px solid #2f74b4;border-radius:6px;background:linear-gradient(#fefdfc,#f7f2e9);box-shadow:inset 0 0 0 1px #b4cfe4;"></div>
<span class="t lbl" style="left:1040px;top:439.75px;"><u>У</u>становить</span>
<svg class="abs" style="left:690px;top:476px" width="8" height="9" viewBox="0 0 8 9"><path d="M1.500 1.500 L5 4.500 L1.500 7.500" fill="none" stroke="#000" stroke-width="1.800"/></svg>
<span class="t lbl" style="left:701px;top:471.75px;letter-spacing:-.12px;"><u>И</u>нтерактивность</span>
<!-- dock scrollbar -->
<svg class="abs" style="left:1184px;top:0" width="20" height="500" viewBox="1184 146 20 500">
<rect x="1191.500" y="160.500" width="4" height="453" rx="2" fill="#e0d2b4" stroke="#c9b48a"/>
<rect x="1186.500" y="308.500" width="14" height="249" rx="5" fill="url(#gSl)" stroke="#cdb88c"/>
<path d="M1191 430.500h5M1191 433.500h5M1191 436.500h5" stroke="#cdb88c" stroke-width="1"/>
</svg>
<!-- mouse cursor -->
<svg class="abs" style="left:1072px;top:457px" width="18" height="24" viewBox="1072 603 18 24"><path d="M1074.500 604.500 L1086.500 616.300 L1084.800 621.800 L1080.500 624 L1074.500 621 Z" fill="#f0d818" stroke="#1c1c98" stroke-width="1.100" stroke-linejoin="round"/><path d="M1075.800 608 L1084.500 616.800 L1078 618.500 Z" fill="#f8ec70" opacity=".7"/></svg>
</div>
<!-- ================= RIGHT TOOLBARS ================= -->
<div id="rtools" class="abs" style="left:0;top:146px;width:1280px;height:500px;">
<div class="tsel" style="left:1245px;top:2px;"></div>
<div class="tsel" style="left:1245px;top:230px;"></div>
<div class="tsel" style="left:1245px;top:332px;"></div>
<svg class="abs" style="left:1204px;top:0" width="76" height="500" viewBox="1204 146 76 500">
<defs>
<linearGradient id="gPaper" x1="0" y1="0" x2="1" y2="1"><stop offset="0" stop-color="#fdfdfd"/><stop offset="1" stop-color="#d4d4d4"/></linearGradient>
<linearGradient id="gPlus" x1="0" y1="0" x2="0" y2="1"><stop offset="0" stop-color="#c8e060"/><stop offset="1" stop-color="#8cb820"/></linearGradient>
<linearGradient id="gFolder" x1="0" y1="0" x2="0" y2="1"><stop offset="0" stop-color="#8cc0f0"/><stop offset="1" stop-color="#5c98d8"/></linearGradient>
<linearGradient id="gDrive" x1="0" y1="0" x2="0" y2="1"><stop offset="0" stop-color="#f0f0f0"/><stop offset="1" stop-color="#b0b0b0"/></linearGradient>
<linearGradient id="gUndo" x1="0" y1="0" x2="1" y2="1"><stop offset="0" stop-color="#fcb878"/><stop offset="1" stop-color="#e05810"/></linearGradient>
<linearGradient id="gRedo" x1="0" y1="0" x2="1" y2="1"><stop offset="0" stop-color="#e4e4e4"/><stop offset="1" stop-color="#b8b8b8"/></linearGradient>
<linearGradient id="gHsep" x1="0" y1="0" x2="1" y2="0"><stop offset="0" stop-color="#c4ab7c" stop-opacity="0"/><stop offset=".5" stop-color="#bfa472"/><stop offset="1" stop-color="#c4ab7c" stop-opacity="0"/></linearGradient>
<g id="snapnode"><path d="M0 -3.700 L3.700 0 L0 3.700 L-3.700 0 Z"/></g>
</defs>
<!-- horizontal separators -->
<g fill="url(#gHsep)">
<rect x="1251" y="186" width="18" height="1"/><rect x="1213" y="296" width="18" height="1"/><rect x="1251" y="368" width="18" height="1"/><rect x="1213" y="380" width="18" height="1"/><rect x="1213" y="464" width="18" height="1"/><rect x="1213" y="584" width="18" height="1"/><rect x="1251" y="584" width="18" height="1"/>
</g>
<!-- new -->
<path d="M1213.500 154.500 h11.500 l5 5 v15.500 h-16.500 z" fill="url(#gPaper)" stroke="#b8b8b8"/>
<path d="M1225 154.500 v5 h5" fill="#f4f4f4" stroke="#b8b8b8" stroke-width=".8"/>
<path d="M1225.500 165.500 h4 v3.500 h3.500 v4 h-3.500 v3.500 h-4 v-3.500 h-3.500 v-4 h3.500 z" fill="url(#gPlus)" stroke="#5a8a10" stroke-width="1"/>
<!-- open -->
<path d="M1213.500 195 h17 v8 h-17 z" fill="#ececec" stroke="#a8a8a8" stroke-width=".8"/>
<path d="M1222 190.500 L1228.500 197.500 H1225 V201 H1219 V197.500 H1215.500 Z" fill="#a8d048" stroke="#5a8a10" stroke-width=".9"/>
<path d="M1211.500 202.500 h21 l-1 9 h-19 z" fill="url(#gFolder)" stroke="#4a80b8" stroke-width=".9"/>
<rect x="1211" y="212" width="22" height="1" fill="#b8b0a0" opacity=".6"/>
<!-- save -->
<path d="M1214.500 226.500 h15 l3 17 h-21 z" fill="url(#gDrive)" stroke="#909090" stroke-width=".9"/>
<path d="M1211.500 243.500 h21 v3.500 q0 1 -1 1 h-19 q-1 0 -1 -1 z" fill="#2a2a2a"/>
<path d="M1219 226 H1225 V232.500 H1229 L1222 240 L1215 232.500 H1219 Z" fill="#a8d048" stroke="#5a8a10" stroke-width=".9"/>
<!-- print -->
<path d="M1215.500 262.500 h13 v10 h-13 z" fill="#fafafa" stroke="#aaa" stroke-width=".8"/>
<path d="M1220.500 265 h3 v3 h2.500 l-4 4 l-4 -4 h2.500 z" fill="#a4a4a4"/>
<rect x="1211.500" y="271.500" width="21" height="10" rx="2" fill="#f0f0f0" stroke="#888" stroke-width=".9"/>
<rect x="1214.500" y="273.500" width="15" height="4.500" fill="#2c2c2c"/>
<rect x="1214.500" y="280" width="15" height="3.500" fill="#fff" stroke="#888" stroke-width=".7"/>
<circle cx="1230.300" cy="278.500" r=".8" fill="#40c040"/>
<!-- import -->
<path d="M1213.500 310.500 h11.500 l5 5 v14.500 h-16.500 z" fill="#e8eef6" stroke="#ccd4dc"/>
<path d="M1225 310.500 v5 h5" fill="#f8f8f8" stroke="#ccd4dc" stroke-width=".8"/>
<path d="M1213 318.500 h7 v-3 l6 5.500 l-6 5.500 v-3 h-7 z" fill="#68a4d8"/>
<!-- export -->
<path d="M1213.500 346.500 h11.500 l5 5 v14.500 h-16.500 z" fill="#e8eaf2" stroke="#ccd0dc"/>
<path d="M1225 346.500 v5 h5" fill="#f8f8f8" stroke="#ccd0dc" stroke-width=".8"/>
<path d="M1220 354.500 h6.500 v-3 l6.500 5.500 l-6.500 5.500 v-3 h-6.500 z" fill="#d868d0"/>
<!-- undo -->
<path d="M1211.500 403.500 L1222 395.500 V400 Q1232 400.500 1232.500 409 Q1232.500 412 1230.500 414 Q1230.500 408 1222 407.500 V411.500 Z" fill="url(#gUndo)" stroke="#d85810" stroke-width=".8" stroke-linejoin="round"/>
<!-- redo (insensitive) -->
<path d="M1232.500 439.500 L1222 431.500 V436 Q1212 436.500 1211.500 445 Q1211.500 448 1213.500 450 Q1213.500 444 1222 443.500 V447.500 Z" fill="url(#gRedo)" stroke="#c4c4c4" stroke-width=".8" stroke-linejoin="round"/>
<ellipse cx="1221" cy="450.500" rx="8" ry="1.200" fill="#c8c0b0" opacity=".5"/>
<!-- copy -->
<path d="M1212.500 478.500 h13 v12 h-13 z" fill="#fafafa" stroke="#999" stroke-width=".9"/>
<path d="M1214.500 481.500h9M1214.500 484h9M1214.500 486.500h5" stroke="#bbb" stroke-width=".8"/>
<path d="M1218.500 483.500 h14 v8.500 l-3.500 3.500 h-10.500 z" fill="#fff" stroke="#999" stroke-width=".9"/>
<path d="M1221 486.500h9M1221 489h9M1221 491.500h6" stroke="#aaa" stroke-width=".8"/>
<path d="M1229 495.500 v-3.500 h3.500 z" fill="#888"/>
<!-- cut -->
<path d="M1215.500 514.500 L1222.500 527 L1220.500 529 L1214 516 Z" fill="#f4f4f4" stroke="#a0a0a0" stroke-width=".7"/>
<path d="M1227.500 514.500 L1220.500 527 L1222.500 529 L1229 516 Z" fill="#e8e8e8" stroke="#a0a0a0" stroke-width=".7"/>
<ellipse cx="1217" cy="531" rx="3.200" ry="3.300" fill="none" stroke="#c87800" stroke-width="2.200"/>
<ellipse cx="1226" cy="531" rx="3.200" ry="3.300" fill="none" stroke="#c87800" stroke-width="2.200"/>
<circle cx="1221.500" cy="526" r=".9" fill="#888"/>
<!-- paste -->
<rect x="1213.500" y="552.500" width="17" height="18" rx="1.500" fill="#c88820" stroke="#8a5400" stroke-width="1"/>
<path d="M1218.500 553 q0 -3 3.500 -3 q3.500 0 3.500 3 z" fill="#b8b8b8" stroke="#777" stroke-width=".7"/>
<path d="M1216.500 554.500 h11 v9 l-4 4 h-7 z" fill="#fcfcfc" stroke="#999" stroke-width=".7"/>
<path d="M1218.500 557.500h7M1218.500 559.500h7M1218.500 561.500h5" stroke="#bbb" stroke-width=".7"/>
<path d="M1223.500 567.500 v-4 h4 z" fill="#aaa"/>
<!-- snap icons -->
<g stroke-width="1.300">
<path d="M1256.500 160.500 L1265.500 169" stroke="#000" stroke-width="1.500"/><path d="M1267.800 171 L1261.800 169.800 L1266.300 165.300 Z" fill="#000" stroke="none"/>
<use href="#snapnode" x="1254.500" y="158.200" fill="#b4a8e0" stroke="#0000f0"/>
<use href="#snapnode" x="1268.500" y="172" fill="#b4a8d8" stroke="#108010"/>
<path d="M1255.500 205 L1264.500 214" stroke="#000" stroke-width="1.500"/><path d="M1266.800 216 L1260.800 214.800 L1265.300 210.300 Z" fill="#000" stroke="none"/>
<use href="#snapnode" x="1253.500" y="203" fill="#b4a8e0" stroke="#0000f0" transform="translate(0 0)"/>
<use href="#snapnode" x="1267.600" y="217" fill="#b4a8d8" stroke="#108010"/>
<path d="M1256.500 388.800 L1265.500 397.300" stroke="#000" stroke-width="1.500"/><path d="M1267.800 399.300 L1261.800 398.100 L1266.300 393.600 Z" fill="#000" stroke="none"/>
<use href="#snapnode" x="1254.500" y="386.500" fill="#b4a8e0" stroke="#0000f0"/>
<use href="#snapnode" x="1268.500" y="400.300" fill="#b4a8d8" stroke="#108010"/>
</g>
<g stroke="#8c8678" stroke-width="1.200" fill="none" stroke-dasharray="2.200 1.600">
<path d="M1268.700 233 V251 H1251"/>
<path d="M1268.700 267 V281 M1264.500 285 H1251"/>
<path d="M1267.200 311 V318.500 H1250"/>
<path d="M1267.500 336 V352.500 H1250"/>
</g>
<g stroke="#8c8678" stroke-width="1" fill="#d4cfc4">
<path d="M1268.700 281.300 l3.600 3.600 l-3.600 3.600 l-3.600 -3.600 z"/>
<path d="M1267.200 303.400 l3 3.600 l-3 3.600 l-3 -3.600 z"/><path d="M1267.200 301.500 v2" />
<circle cx="1255" cy="341" r="2.300"/>
</g>
<!-- path snaps -->
<path d="M1250.500 417.500 Q1262 419 1264.500 427 Q1266 432 1260.500 435 Q1269 434.500 1271 427" fill="none" stroke="#108010" stroke-width="1.500"/>
<path d="M1251 469.500 L1271 450 M1251 462.800 L1271 457" stroke="#444" stroke-width="1.100"/>
<circle cx="1260.700" cy="460.300" r="2.600" fill="#8c84c8" stroke="#108010" stroke-width="1.300"/>
<path d="M1251.500 485 Q1262 487 1264.500 494 Q1266 499 1263 502 Q1270 500.500 1271.500 495" fill="none" stroke="#444" stroke-width="1.200"/>
<use href="#snapnode" x="1261.500" y="501.800" fill="#9a90d0" stroke="#108010" stroke-width="1.300" transform="translate(0 0)"/>
<path d="M1251.500 518.500 Q1258 519 1261 522 Q1266.500 528 1262 535 Q1269.500 534 1271 528" fill="none" stroke="#444" stroke-width="1.200"/>
<rect x="1258" y="519" width="5.500" height="5.500" fill="#8c84c8" stroke="#108010" stroke-width="1.300"/>
<path d="M1251 572 L1271 552" stroke="#555" stroke-width="1.100"/>
<path d="M1253.500 565 L1255.500 572.500 M1256.300 562.500 L1258.300 570 M1264 554.500 L1266 562 M1266.800 552 L1268.800 559.500" stroke="#d01020" stroke-width="1.400"/>
<circle cx="1260.800" cy="562" r="2.600" fill="#8c84c8" stroke="#108010" stroke-width="1.300"/>
</svg>
</div>
<!-- ================= PALETTE ================= -->
<div id="palette" class="abs" style="left:0;top:646px;width:1280px;height:40px;">
<div class="abs" style="left:2px;top:1px;width:1260px;height:16px;background:linear-gradient(to right,#000000 16px,#000000 32px,#1a1a1a 32px,#1a1a1a 48px,#333333 48px,#333333 64px,#4d4d4d 64px,#4d4d4d 80px,#666666 80px,#666666 96px,#808080 96px,#808080 112px,#999999 112px,#999999 128px,#b3b3b3 128px,#b3b3b3 144px,#cccccc 144px,#cccccc 160px,#e6e6e6 160px,#e6e6e6 176px,#ececec 176px,#ececec 192px,#f2f2f2 192px,#f2f2f2 208px,#f9f9f9 208px,#f9f9f9 224px,#ffffff 224px,#ffffff 240px,#800000 240px,#800000 256px,#ff0000 256px,#ff0000 272px,#808000 272px,#808000 288px,#ffff00 288px,#ffff00 304px,#008000 304px,#008000 320px,#00ff00 320px,#00ff00 336px,#008080 336px,#008080 352px,#00ffff 352px,#00ffff 368px,#000080 368px,#000080 384px,#0000ff 384px,#0000ff 400px,#800080 400px,#800080 416px,#ff00ff 416px,#ff00ff 432px,#2b0000 432px,#2b0000 448px,#550000 448px,#550000 464px,#800000 464px,#800000 480px,#aa0000 480px,#aa0000 496px,#d40000 496px,#d40000 512px,#ff0000 512px,#ff0000 528px,#ff2a2a 528px,#ff2a2a 544px,#ff5555 544px,#ff5555 560px,#ff8080 560px,#ff8080 576px,#ffaaaa 576px,#ffaaaa 592px,#ffd5d5 592px,#ffd5d5 608px,#280b0b 608px,#280b0b 624px,#501616 624px,#501616 640px,#782121 640px,#782121 656px,#a02c2c 656px,#a02c2c 672px,#c83737 672px,#c83737 688px,#d35f5f 688px,#d35f5f 704px,#de8787 704px,#de8787 720px,#e9afaf 720px,#e9afaf 736px,#f4d7d7 736px,#f4d7d7 752px,#241c1c 752px,#241c1c 768px,#483737 768px,#483737 784px,#6c5353 784px,#6c5353 800px,#916f6f 800px,#916f6f 816px,#ac9393 816px,#ac9393 832px,#c8b7b7 832px,#c8b7b7 848px,#e3dbdb 848px,#e3dbdb 864px,#2b1100 864px,#2b1100 880px,#552200 880px,#552200 896px,#803300 896px,#803300 912px,#aa4400 912px,#aa4400 928px,#d45500 928px,#d45500 944px,#ff6600 944px,#ff6600 960px,#ff7f2a 960px,#ff7f2a 976px,#ff9955 976px,#ff9955 992px,#ffb380 992px,#ffb380 1008px,#ffccaa 1008px,#ffccaa 1024px,#ffe6d5 1024px,#ffe6d5 1040px,#28170b 1040px,#28170b 1056px,#502d16 1056px,#502d16 1072px,#784421 1072px,#784421 1088px,#a05a2c 1088px,#a05a2c 1104px,#c87137 1104px,#c87137 1120px,#d38d5f 1120px,#d38d5f 1136px,#deaa87 1136px,#deaa87 1152px,#e9c6af 1152px,#e9c6af 1168px,#f4e3d7 1168px,#f4e3d7 1184px,#241f1c 1184px,#241f1c 1200px,#483e37 1200px,#483e37 1216px,#6c5d53 1216px,#6c5d53 1232px,#917c6f 1232px,#917c6f 1248px,#ac9d93 1248px,#ac9d93 1260px);"></div>
<svg class="abs" style="left:2px;top:1px" width="16" height="16" viewBox="0 0 16 16"><rect width="16" height="16" fill="#fff"/><path d="M0 0 L16 16 M16 0 L0 16" stroke="#8a1010" stroke-width="1.400"/></svg>
<svg class="abs" style="left:0;top:20px" width="1280" height="18" viewBox="0 666 1280 18">
<rect x="15.500" y="673.500" width="1217" height="4" rx="2" fill="#e0d2b4" stroke="#c9b48a"/>
<rect x="15.500" y="669" width="221" height="13" rx="5" fill="url(#gSlV)" stroke="#cdb88c"/>
<path d="M123.500 672.500v5M126.500 672.500v5M129.500 672.500v5" stroke="#cdb88c" stroke-width="1"/>
</svg>
</div>
<!-- ================= STATUS BAR ================= -->
<div id="status" class="abs" style="left:0;top:685px;width:1280px;height:35px;">
<span class="t s15" style="left:2px;top:-.300px;font-size:14.850px;">Заливка:</span><span class="t s15 b" style="left:73px;top:-.300px;font-size:15px;">Снята</span>
<span class="t s15" style="left:2px;top:17.700px;font-size:15px;">Обводка:</span><span class="t s15 b" style="left:73px;top:17.700px;font-size:15px;">Снята</span>
<span class="t s15" style="left:123px;top:9px;font-size:15px;">Н:</span>
<div class="spin" style="left:140px;top:4px;width:47px;height:25px;"><span class="t" style="left:3px;">0</span></div>
<svg class="abs" style="left:188px;top:0" width="60" height="35" viewBox="188 685 60 35">
<rect x="190" y="686" width="1" height="32" fill="url(#gSep)"/><rect x="191" y="686" width="1" height="32" fill="url(#gSepW)" opacity=".7"/>
<path d="M199.500 703.500 Q207 695 214.500 703.500 Q207 710.500 199.500 703.500 Z" fill="#f4f4f4" stroke="#555" stroke-width=".9"/>
<path d="M199 700.500 Q207 692.500 215 700.500" fill="none" stroke="#444" stroke-width="1.100"/>
<circle cx="207" cy="703.500" r="3.300" fill="#4a88c8"/><circle cx="207" cy="703.500" r="1.400" fill="#123"/>
<path d="M234.500 700.500 v-2.500 a3.200 3.200 0 0 1 6.400 0 v1.500" fill="none" stroke="#c8c8c8" stroke-width="1.800"/>
<rect x="232" y="700.500" width="10" height="8.500" rx=".8" fill="url(#gLock)" stroke="#a07800" stroke-width=".6"/>
</svg>
<div class="combo" style="left:253px;top:0;width:113px;height:33px;background:linear-gradient(#f3ecdf,#ebe0cc);"><span class="t b" style="left:4px;top:8.500px;font-size:16px;">•Layer 1</span></div>
<span class="t lbl" id="stmsg" style="left:368px;top:7.500px;font-size:18.520px;letter-spacing:-.09px;"><b style="letter-spacing:0">Изображение</b> 100 × 100: включенное в слое <b style="letter-spacing:-.35px">Layer 1</b>. Щелчок по объекту переключа…</span>
<svg class="abs" style="left:1113px;top:0" width="6" height="35" viewBox="1113 685 6 35"><rect x="1115" y="686" width="1" height="32" fill="url(#gSep)"/><rect x="1116" y="686" width="1" height="32" fill="url(#gSepW)" opacity=".7"/></svg>
<span class="t s15" style="left:1118px;top:1px;">X:</span><span class="t s15" style="left:1118px;top:19px;">Y:</span>
<span class="t mono" style="left:1143px;top:-.500px;">141.92</span><span class="t mono" style="left:1152px;top:17.500px;">36.62</span>
<span class="t s15" style="left:1208.500px;top:9.300px;">Z:</span>
<div class="spin" style="left:1223px;top:4px;width:56px;height:25px;"><span class="t" style="left:11px;width:24px;overflow:hidden;height:16px;">99%</span></div>
</div>
<svg id="chevs" style="position:absolute;left:0;top:0;pointer-events:none" width="1280" height="720" viewBox="0 0 1280 720"><g fill="none" stroke="#000" stroke-linejoin="miter" stroke-linecap="round"><path d="M14.40 625.00 L17.80 627.60 L14.40 630.20" stroke-width="2.1"/><path d="M66.30 631.00 L63.00 633.50 L66.30 636.00" stroke-width="2.1"/><path d="M624.30 631.00 L621.00 633.50 L624.30 636.00" stroke-width="2.1"/><path d="M635.00 631.00 L638.00 633.50 L635.00 636.00" stroke-width="2.1"/><path d="M653.00 176.20 L655.60 173.30 L658.20 176.20" stroke-width="2.1"/><path d="M653.00 603.30 L655.60 600.40 L658.20 603.30" stroke-width="2.1"/><path d="M653.00 614.00 L655.60 616.90 L658.20 614.00" stroke-width="2.1"/><path d="M1190.80 154.30 L1193.50 151.40 L1196.20 154.30" stroke-width="2.1"/><path d="M1190.80 624.90 L1193.50 622.00 L1196.20 624.90" stroke-width="2.1"/><path d="M1190.80 635.90 L1193.50 638.80 L1196.20 635.90" stroke-width="2.1"/><path d="M1220.80 625.00 L1224.00 627.60 L1220.80 630.20" stroke-width="2.1"/><path d="M1259.70 625.00 L1263.00 627.60 L1259.70 630.20" stroke-width="2.1"/><path d="M1273.30 650.00 L1269.90 652.50 L1273.30 655.00" stroke-width="2.1"/><path d="M1244.20 673.00 L1240.80 675.50 L1244.20 678.00" stroke-width="2.1"/><path d="M1254.70 673.00 L1258.00 675.50 L1254.70 678.00" stroke-width="2.1"/><path d="M9.60 673.00 L6.00 675.50 L9.60 678.00" stroke-width="2.1"/><path d="M501.60 120.20 L504.40 118.00 L507.20 120.20" stroke-width="2.0"/><path d="M501.60 127.80 L504.40 130.00 L507.20 127.80" stroke-width="2.0"/><path d="M602.60 120.20 L605.40 118.00 L608.20 120.20" stroke-width="2.0"/><path d="M602.60 127.80 L605.40 130.00 L608.20 127.80" stroke-width="2.0"/><path d="M708.60 120.20 L711.40 118.00 L714.20 120.20" stroke-width="2.0"/><path d="M708.60 127.80 L711.40 130.00 L714.20 127.80" stroke-width="2.0"/><path d="M844.60 120.20 L847.40 118.00 L850.20 120.20" stroke-width="2.0"/><path d="M844.60 127.80 L847.40 130.00 L850.20 127.80" stroke-width="2.0"/><path d="M912.90 122.20 L915.65 126.00 L918.40 122.20" stroke-width="2.2"/><path d="M1151.50 296.00 L1154.25 300.00 L1157.00 296.00" stroke-width="2.2"/><path d="M175.50 697.70 L178.50 695.30 L181.50 697.70" stroke-width="2.0"/><path d="M175.50 705.50 L178.50 708.00 L181.50 705.50" stroke-width="2.0"/><path d="M349.70 700.80 L352.50 704.40 L355.30 700.80" stroke-width="2.2"/><path d="M1267.80 698.20 L1270.40 695.80 L1273.00 698.20" stroke-width="2.0"/><path d="M1267.80 706.20 L1270.40 708.60 L1273.00 706.20" stroke-width="2.0"/></g></svg>
</body>
</html>
